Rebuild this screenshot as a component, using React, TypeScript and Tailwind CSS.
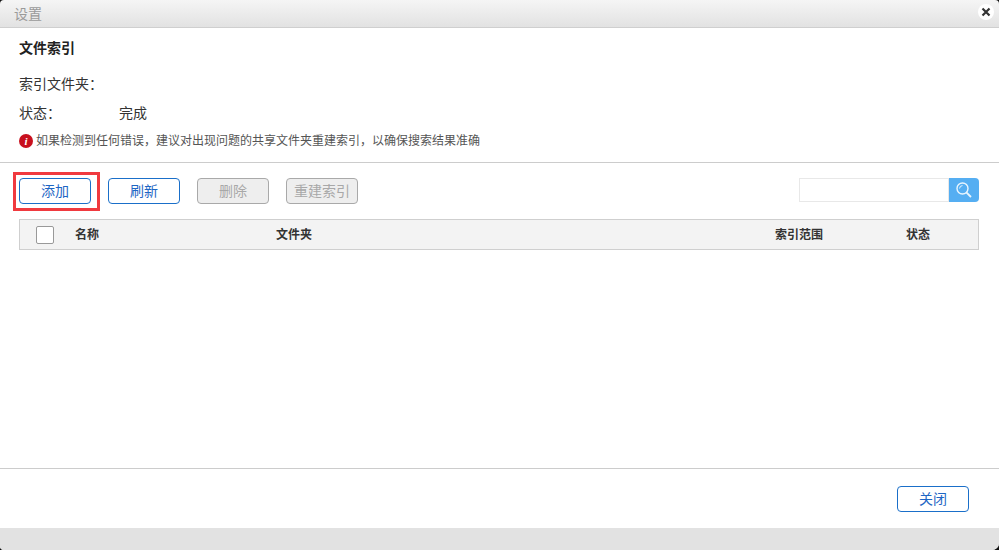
import React from "react";

const font = { fontFamily: '"Liberation Sans", "Noto Sans CJK SC", sans-serif' };

function Btn({ children, disabled }: { children: React.ReactNode; disabled?: boolean }) {
  return (
    <button
      className={
        "h-[26px] w-[72px] rounded-[4px] border text-[14px] leading-none " +
        (disabled
          ? "border-[#a9a9a9] bg-[#eeeeee] text-[#a8a8a8]"
          : "border-[#1a6fc9] bg-white text-[#1e66c4]")
      }
    >
      {children}
    </button>
  );
}

export default function App() {
  return (
    <div style={font} className="h-[550px] w-[999px] bg-[#111111]">
      <div className="flex h-[550px] w-[999px] flex-col overflow-hidden rounded-[4px] rounded-br-[7px] text-[#333333]">
        <header className="flex h-[28px] shrink-0 items-start justify-between border-b border-[#cfcfcf] bg-gradient-to-b from-[#f5f5f5] to-[#e2e2e2] pl-[14px] pr-[5px]">
          <span className="mt-[4px] text-[14px] leading-[20px] text-[#9a9a9a]">设置</span>
          <span className="mt-[4px] flex h-[16px] w-[16px] items-center justify-center rounded-full bg-white">
            <svg width="10" height="10" viewBox="0 0 10 10">
              <path d="M1.5 1.5 L8.5 8.5 M8.5 1.5 L1.5 8.5" stroke="#333" strokeWidth="2.2" />
            </svg>
          </span>
        </header>

        <div className="flex min-h-0 flex-1 flex-col bg-white">
          <section className="h-[135px] shrink-0 border-b border-[#cccccc] px-[19px]">
            <h1 className="mt-[11px] text-[14px] font-bold leading-[18px] text-[#222222]">文件索引</h1>
            <div className="mt-[17px] text-[14px] leading-[20px]">索引文件夹：</div>
            <div className="mt-[9px] flex text-[14px] leading-[20px]">
              <span className="w-[100px]">状态：</span>
              <span>完成</span>
            </div>
            <div className="mt-[9px] flex items-center gap-[3px] text-[12px] leading-[18px] text-[#555555]">
              <span className="flex h-[14px] w-[14px] items-center justify-center rounded-full bg-[#c8101e] text-[11px] font-bold italic leading-none text-white" style={{ fontFamily: '"Liberation Serif", serif' }}>
                i
              </span>
              <span>如果检测到任何错误，建议对出现问题的共享文件夹重建索引，以确保搜索结果准确</span>
            </div>
          </section>

          <section className="flex min-h-0 flex-1 flex-col border-b border-[#cccccc] pl-[19px] pr-[20px] pt-[15px]">
            <div className="flex items-start">
              <div className="relative">
                <Btn>添加</Btn>
                <span className="pointer-events-none absolute left-[-6px] top-[-6px] h-[39px] w-[87px] border-[3px] border-[#f03a3f]" />
              </div>
              <div className="ml-[17px] flex gap-[17px]">
                <Btn>刷新</Btn>
                <Btn disabled>删除</Btn>
                <Btn disabled>重建索引</Btn>
              </div>
              <div className="ml-auto flex h-[24px]">
                <div className="h-[24px] w-[150px] border border-[#e8e8e8] bg-white" />
                <div className="flex h-[24px] w-[30px] items-center justify-center rounded-r-[4px] bg-[#55aef2]">
                  <svg width="18" height="18" viewBox="0 0 18 18" fill="none">
                    <circle cx="7.5" cy="7.5" r="5.5" stroke="#e9f5fe" strokeWidth="1.4" />
                    <path d="M11.6 11.6 L16 16" stroke="#e9f5fe" strokeWidth="1.8" />
                    <path d="M4.6 7.5 A3 3 0 0 1 7.5 4.6" stroke="#e9f5fe" strokeWidth="1" />
                  </svg>
                </div>
              </div>
            </div>

            <div className="mt-[15px] flex h-[31px] w-[960px] items-center border border-[#cfcfcf] bg-[#f3f3f3] text-[12px] font-bold text-[#333333]">
              <span className="ml-[16px] h-[18px] w-[18px] rounded-[2px] border border-[#999999] bg-white" />
              <span className="ml-[21px] w-[201px]">名称</span>
              <span className="w-[499px]">文件夹</span>
              <span className="w-[131px]">索引范围</span>
              <span>状态</span>
            </div>
          </section>

          <footer className="flex h-[59px] shrink-0 items-start justify-end pr-[30px] pt-[17px]">
            <Btn>关闭</Btn>
          </footer>

          <div className="h-[22px] shrink-0 bg-[#e2e2e2]" />
        </div>
      </div>
    </div>
  );
}
